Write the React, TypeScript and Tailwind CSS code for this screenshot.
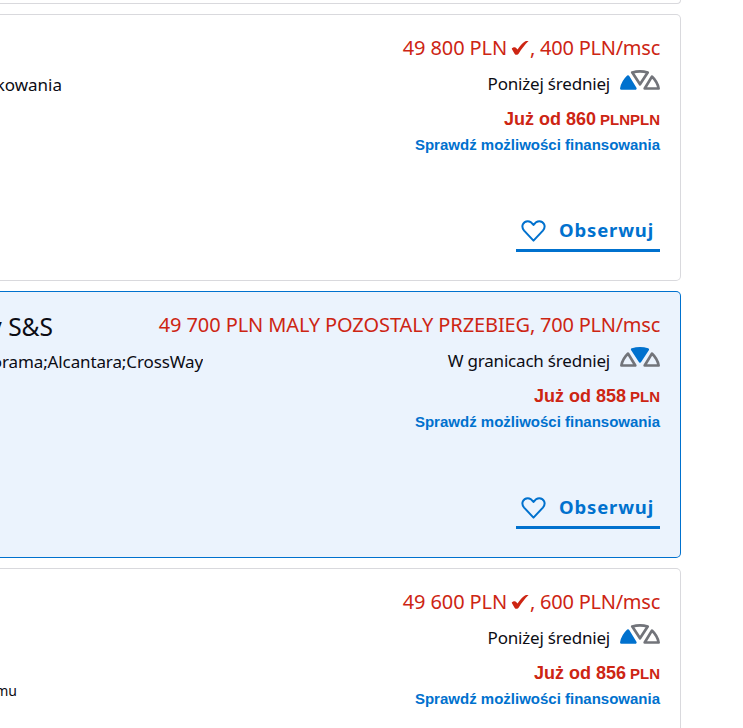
import React from "react";

type Level = "below" | "within";

interface Offer {
  title?: string;
  details?: string;
  note?: string;
  price: [string, string];
  marked: boolean;
  level: Level;
  rate: string;
  currency: string;
  highlighted: boolean;
}

const offers: Offer[] = [
  { details: "kowania", price: ["49 800 PLN", ", 400 PLN/msc"], marked: true, level: "below", rate: "Już od 860", currency: "PLNPLN", highlighted: false },
  { title: "y S&S", details: "orama;Alcantara;CrossWay", price: ["49 700 PLN MALY POZOSTALY PRZEBIEG", ", 700 PLN/msc"], marked: false, level: "within", rate: "Już od 858", currency: "PLN", highlighted: true },
  { note: "mu", price: ["49 600 PLN", ", 600 PLN/msc"], marked: true, level: "below", rate: "Już od 856", currency: "PLN", highlighted: false },
];

function Gauge({ level }: { level: Level }) {
  const below = level === "below";
  return (
    <svg className="ml-[10px] h-5 w-10 shrink-0" viewBox="0 0 40 20" strokeWidth="2.7" strokeLinejoin="round">
      <path d="M1.4 18.5C2.2 14 4.7 9.8 8.1 6.6L15.3 18.5Z" fill={below ? "#0071ce" : "none"} stroke={below ? "#0071ce" : "#72747a"} />
      <path d="M12.3 2.5C17 1.1 23 1.1 27.7 2.5L20 14.3Z" fill={below ? "none" : "#0071ce"} stroke={below ? "#72747a" : "#0071ce"} />
      <path d="M31.9 6.6C35.3 9.8 37.8 14 38.6 18.5H24.7Z" fill="none" stroke="#72747a" />
    </svg>
  );
}

function Check() {
  return (
    <svg className="ml-[4px] mr-[1px] mt-[-1px] h-[14px] w-[18px]" viewBox="0 0 18 14" fill="#cd2513">
      <path d="M.7 7.8C1.8 6 4.5 5.8 5.4 7.3L6.5 8.6C9 4.8 11.4 2.2 13.6.8C14.6.1 15.7.1 17.6.1C13.8 3.8 10.5 8 7.9 12.3C6.8 14.1 4.6 14.3 3.7 12.9Z" />
    </svg>
  );
}

function OfferCard({ offer }: { offer: Offer }) {
  return (
    <article className={`h-[267px] shrink-0 rounded-r-[5px] border border-l-0 pr-5 pt-[19px] ${offer.highlighted ? "border-[#0071ce] bg-[#ebf3fd]" : "border-[#d9d9dd] bg-white"}`}>
      <div className="flex h-7 items-center justify-between">
        <div className="flex w-[53px] justify-end overflow-hidden whitespace-nowrap pt-[3px] text-[24.5px] leading-8">{offer.title}</div>
        <div className="flex items-center whitespace-pre text-[20px] leading-7 text-[#cd2513]">
          <span className="tracking-[-0.1px]">{offer.price[0]}</span>{offer.marked && <Check />}<span className="tracking-[-0.25px]">{offer.price[1]}</span>
        </div>
      </div>
      <div className="mt-2 flex h-7 items-center justify-between">
        <div className={`flex justify-end overflow-hidden whitespace-nowrap pt-[2px] text-[17px] leading-7 ${offer.highlighted ? "w-[203px] tracking-[-0.12px]" : "w-[62px]"}`}>{offer.details}</div>
        <div className="flex items-center text-[17px] leading-7">
          <span className="tracking-[-0.2px]">{offer.level === "below" ? "Poniżej średniej" : "W granicach średniej"}</span>
          <span className="-mt-[9px]"><Gauge level={offer.level} /></span>
        </div>
      </div>
      <div className="mt-2 flex h-[26px] items-baseline justify-end font-['Liberation_Sans',Arial,sans-serif] text-[18px] font-bold leading-[26px] text-[#cd2513]">
        <span>{offer.rate}</span><span className="ml-[4px] text-[15px]">{offer.currency}</span>
      </div>
      <div className="flex h-[26px] items-center justify-between">
        <span className="mb-[13px] flex w-[17px] justify-end self-end overflow-hidden text-[14px] leading-4">{offer.note}</span>
        <a className="font-['Liberation_Sans',Arial,sans-serif] text-[15px] font-bold leading-[26px] text-[#0071ce]">Sprawdź możliwości finansowania</a>
      </div>
      <div className="mt-[55px] flex justify-end">
        <button className="flex h-[39px] w-36 items-center border-b-[3px] border-[#0071ce] pb-px pl-[5px] text-[#0071ce]">
          <svg className="h-[22px] w-[25px] shrink-0" viewBox="0 0 25 22" fill="none" stroke="currentColor" strokeWidth="2" strokeLinejoin="round">
            <path d="M12.5 20.6L3.1 10.6C-.4 6.6 2 1.2 6.8 1.2C9.7 1.2 11.2 3.1 12.5 5C13.8 3.1 15.3 1.2 18.2 1.2C23 1.2 25.4 6.6 21.9 10.6Z" />
          </svg>
          <span className="-mt-px ml-[13px] whitespace-nowrap text-[18.5px] font-bold leading-7 tracking-[0.85px]">Obserwuj</span>
        </button>
      </div>
    </article>
  );
}

export default function App() {
  return (
    <main className="h-[728px] w-[743px] overflow-hidden bg-white font-['Noto_Sans',sans-serif] text-[#0c0c14]">
      <div className="flex w-[681px] flex-col gap-[10px]">
        <div className="h-1 shrink-0 rounded-br-[5px] border-b border-r border-[#d9d9dd]" />
        {offers.map((offer) => <OfferCard key={offer.price[0]} offer={offer} />)}
      </div>
    </main>
  );
}
